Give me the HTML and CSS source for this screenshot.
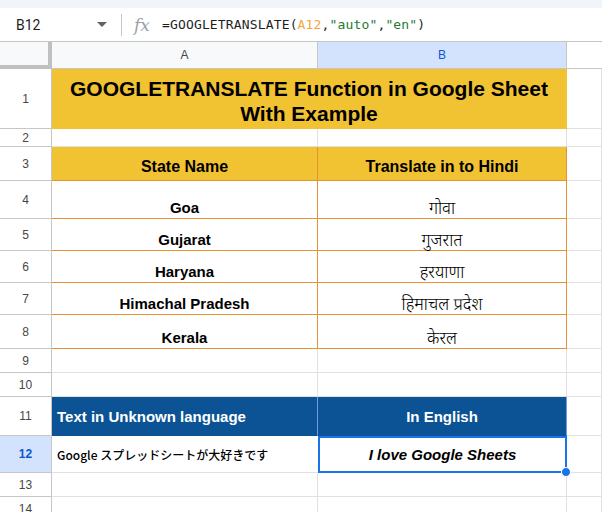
FILE: index.html
```html
<!DOCTYPE html>
<html>
<head>
<meta charset="utf-8">
<link rel="stylesheet" href="styles.css">
</head>
<body>
<div class="topstrip"></div>
<div class="fbar">
  <div class="namebox">B12</div>
  <svg class="caret" width="10" height="6" viewBox="0 0 10 6"><path d="M0 0h10L5 5z" fill="#5f6368"/></svg>
  <div class="sep"></div>
  <div class="fx">fx</div>
  <div class="formula">=GOOGLETRANSLATE(<span class="ref">A12</span>,<span class="str">"auto"</span>,<span class="str">"en"</span>)</div>
</div>
<div class="grid">
  <div class="corner"></div>
  <div class="colh">A</div>
  <div class="colh sel">B</div>
  <div class="colh empty"></div>

  <div class="rowh">1</div>
  <div class="title">GOOGLETRANSLATE Function in Google Sheet<br>With Example</div>
  <div class="c"></div>

  <div class="rowh">2</div>
  <div class="c"></div><div class="c"></div><div class="c"></div>

  <div class="rowh">3</div>
  <div class="th">State Name</div>
  <div class="th">Translate in to Hindi</div>
  <div class="c"></div>

  <div class="rowh">4</div>
  <div class="td en">Goa</div><div class="td hi">गोवा</div><div class="c"></div>
  <div class="rowh">5</div>
  <div class="td en">Gujarat</div><div class="td hi">गुजरात</div><div class="c"></div>
  <div class="rowh">6</div>
  <div class="td en">Haryana</div><div class="td hi">हरयाणा</div><div class="c"></div>
  <div class="rowh">7</div>
  <div class="td en">Himachal Pradesh</div><div class="td hi">हिमाचल प्रदेश</div><div class="c"></div>
  <div class="rowh">8</div>
  <div class="td en">Kerala</div><div class="td hi">केरल</div><div class="c"></div>

  <div class="rowh">9</div>
  <div class="c"></div><div class="c"></div><div class="c"></div>
  <div class="rowh">10</div>
  <div class="c"></div><div class="c"></div><div class="c"></div>

  <div class="rowh">11</div>
  <div class="bh left">Text in Unknown language</div>
  <div class="bh">In English</div>
  <div class="c"></div>

  <div class="rowh selrow">12</div>
  <div class="c jp">Google スプレッドシートが大好きです</div>
  <div class="c out">I love Google Sheets<span class="handle"></span></div>
  <div class="c"></div>

  <div class="rowh">13</div>
  <div class="c"></div><div class="c"></div><div class="c"></div>
  <div class="rowh">14</div>
  <div class="c"></div><div class="c"></div><div class="c"></div>
</div>
</body>
</html>
```

FILE: styles.css
```css
* { box-sizing: border-box; }
html, body { margin: 0; padding: 0; background: #fff; overflow: hidden; }
body { font-family: "Liberation Sans", Arial, sans-serif; width: 602px; height: 512px; }

.topstrip { height: 8px; background: #f1f4f9; }
.fbar {
  height: 34px;
  display: flex;
  align-items: center;
  border-bottom: 1px solid #c4c7c5;
  background: #fff;
}
.namebox { width: 82px; padding-left: 16px; font-size: 14px; color: #1f1f1f; font-family: "Roboto", "Liberation Sans", sans-serif; }
.caret { margin-left: 15px; }
.sep { width: 1px; height: 22px; background: #c4c7c5; margin-left: 14px; }
.fx { font-family: "DejaVu Serif", serif; font-style: italic; color: #9aa0a6; font-size: 17px; margin-left: 12px; width: 28px; }
.formula { font-family: "DejaVu Sans Mono", "Liberation Mono", monospace; font-size: 13px; color: #1f1f1f; letter-spacing: 0.15px; }
.ref { color: #f4a53b; }
.str { color: #1e7a34; }

.grid {
  display: grid;
  grid-template-columns: 52px 266px 249px 1fr;
  grid-template-rows: 27px 60px 18px 34px 38px 32px 32px 32px 34px 24px 24px 39px 37px 24px 24px;
}
.grid > div { border-right: 1px solid #e1e1e1; border-bottom: 1px solid #e1e1e1; }
.corner { background: #f8f9fa; border-right: 4px solid #c0c0c0 !important; border-bottom: 4px solid #c0c0c0 !important; }
.colh {
  background: #f8f9fa; font-size: 12px; color: #444746;
  display: flex; align-items: center; justify-content: center;
  border-bottom: 1px solid #c4c7c5 !important; border-right: 1px solid #c4c7c5 !important;
}
.colh.sel { background: #d3e3fd; color: #0b57d0; }
.colh.empty { background: #fff; border-right: none !important; }
.rowh {
  background: #fff; font-size: 12px; color: #444746;
  display: flex; align-items: center; justify-content: center;
  border-right: 1px solid #c4c7c5 !important; border-bottom: 1px solid #c4c7c5 !important;
}
.rowh.selrow { background: #d3e3fd; color: #0b57d0; font-weight: bold; }

.title {
  grid-column: span 2;
  background: #f1c232;
  border-right: 1px solid #f1c232 !important; border-bottom: 1px solid #f1c232 !important;
  font-weight: bold; font-size: 21px; line-height: 25px; text-align: center;
  display: flex; align-items: center; justify-content: center; color: #000;
  padding-top: 4px;
}
.th {
  background: #f1c232; font-weight: bold; font-size: 16px; color: #000;
  display: flex; align-items: flex-end; justify-content: center; padding-bottom: 4px;
  border-right: 1px solid #e69138 !important; border-bottom: 1px solid #e69138 !important;
}
.td {
  display: flex; align-items: flex-end; justify-content: center;
  border-right: 1px solid #e69138 !important; border-bottom: 1px solid #e69138 !important;
  color: #000;
}
.td.en { font-weight: bold; font-size: 15px; padding-bottom: 2px; }
.td.hi { font-family: "Noto Sans Devanagari", "Lohit Devanagari", "Noto Serif Devanagari", "FreeSans", sans-serif; font-size: 17px; font-weight: 300; line-height: 14px; padding-bottom: 1px; }

.bh {
  background: #0b5394; color: #fff; font-weight: bold; font-size: 15px;
  display: flex; align-items: center; justify-content: center;
  border-right: 1px solid #6d9eeb !important; border-bottom: 1px solid #0b5394 !important;
}
.bh.left { justify-content: flex-start; padding-left: 5px; }
.jp {
  font-family: "Noto Sans CJK JP", sans-serif; font-size: 12px; color: #000; font-weight: 500;
  display: flex; align-items: center; padding-left: 5px;
  border-right: none !important;
}
.out {
  position: relative;
  border: 2px solid #1a73e8 !important;
  font-weight: bold; font-style: italic; font-size: 15px; color: #000;
  display: flex; align-items: center; justify-content: center;
}
.handle {
  position: absolute; right: -6px; bottom: -6px; width: 10px; height: 10px;
  border-radius: 50%; background: #1a73e8; border: 1px solid #fff;
}
```
